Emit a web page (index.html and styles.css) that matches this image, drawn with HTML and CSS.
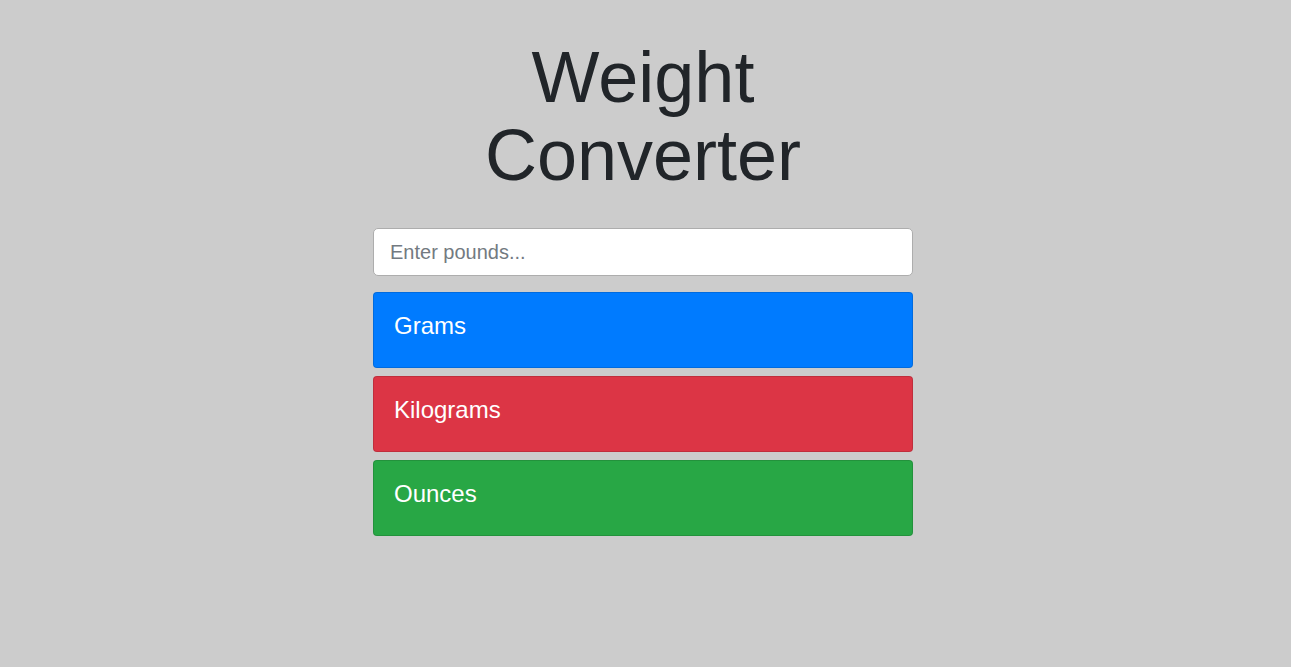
FILE: index.html
```html
<!DOCTYPE html>
<html lang="en">
<head>
<meta charset="utf-8">
<title>Weight Converter</title>
<link rel="stylesheet" href="styles.css">
</head>
<body>
<main class="page">
  <div class="converter">
    <h1 class="title">Weight Converter</h1>
    <form class="form">
      <input class="pounds" type="number" placeholder="Enter pounds...">
    </form>
    <div class="results">
      <div class="card card-blue"><h4 class="card-title">Grams</h4></div>
      <div class="card card-red"><h4 class="card-title">Kilograms</h4></div>
      <div class="card card-green"><h4 class="card-title">Ounces</h4></div>
    </div>
  </div>
</main>
</body>
</html>
```
FILE: styles.css
```css
html, body {
  margin: 0;
  padding: 0;
}
body {
  background: #cccccc;
  font-family: "Liberation Sans", Arial, sans-serif;
  color: #212529;
  height: 667px;
}
.page {
  padding: 38px 5px 0 0;
  display: flex;
  justify-content: center;
}
.converter {
  width: 540px;
  display: flex;
  flex-direction: column;
}
.title {
  margin: 0;
  font-size: 72px;
  font-weight: 400;
  line-height: 78px;
  text-align: center;
  color: #212529;
}
.form {
  margin: 34px 0 0 0;
}
.pounds {
  box-sizing: border-box;
  display: block;
  width: 100%;
  height: 48px;
  padding: 0 16px;
  font-family: inherit;
  font-size: 20px;
  color: #495057;
  background: #ffffff;
  border: 1px solid #adadad;
  border-radius: 5px;
  outline: none;
}
.pounds::placeholder {
  color: #737a81;
}
.results {
  margin-top: 16px;
  display: flex;
  flex-direction: column;
  gap: 8px;
}
.card {
  box-sizing: border-box;
  height: 76px;
  padding: 18px 20px 0 20px;
  border: 1px solid rgba(0, 0, 0, 0.125);
  border-radius: 4px;
  color: #ffffff;
}
.card-title {
  margin: 0;
  font-size: 24px;
  font-weight: 400;
  line-height: 29px;
}
.card-blue { background: #007bff; }
.card-red { background: #dc3545; }
.card-green { background: #28a745; }
```
